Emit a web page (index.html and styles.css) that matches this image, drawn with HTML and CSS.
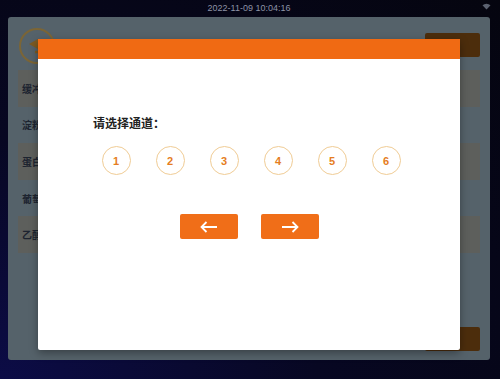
FILE: index.html
```html
<!DOCTYPE html>
<html lang="zh">
<head>
  <meta charset="UTF-8">
  <title>选择通道</title>
  <link rel="stylesheet" href="styles.css">
</head>
<body>
  <div class="statusbar">
    <span class="time">2022-11-09 10:04:16</span>
    <svg class="wifi" width="9" height="7" viewBox="0 0 9 7">
      <path d="M0.5 2.2 A6 6 0 0 1 8.5 2.2 L4.5 6.5 Z" fill="#5b6170"/>
    </svg>
  </div>

  <div class="panel">
    <div class="panel-head">
      <div class="back">
        <svg width="22" height="22" viewBox="0 0 22 22">
          <path d="M3 9 L12 4 L12 14 Z" fill="#7b5a22"/>
          <path d="M9 17 H17" stroke="#7b5a22" stroke-width="2.5"/>
        </svg>
      </div>
      <div class="panel-title">试剂管理</div>
      <div class="btn-dark"></div>
    </div>

    <div class="rows">
      <div class="row striped">缓冲液</div>
      <div class="row">淀粉酶</div>
      <div class="row striped">蛋白酶</div>
      <div class="row">葡萄糖</div>
      <div class="row striped">乙醇</div>
    </div>

    <div class="panel-foot">
      <div class="btn-dark"></div>
    </div>
  </div>

  <div class="modal">
    <div class="modal-head"></div>
    <div class="modal-body">
      <div class="modal-title">请选择通道：</div>
      <div class="channels">
        <div class="channel">1</div>
        <div class="channel">2</div>
        <div class="channel">3</div>
        <div class="channel">4</div>
        <div class="channel">5</div>
        <div class="channel">6</div>
      </div>
      <div class="actions">
        <button class="nav-btn">
          <svg width="20" height="12" viewBox="0 0 20 12">
            <path d="M18 6 H2.5 M7.5 1 L2.5 6 L7.5 11" fill="none" stroke="#fff" stroke-width="1.8"/>
          </svg>
        </button>
        <button class="nav-btn">
          <svg width="20" height="12" viewBox="0 0 20 12">
            <path d="M2 6 H17.5 M12.5 1 L17.5 6 L12.5 11" fill="none" stroke="#fff" stroke-width="1.8"/>
          </svg>
        </button>
      </div>
    </div>
  </div>
</body>
</html>
```

FILE: styles.css
```css
body {
  margin: 0;
  width: 500px;
  height: 379px;
  overflow: hidden;
  font-family: "Noto Sans CJK SC", "Noto Sans", sans-serif;
  background: radial-gradient(ellipse at 0% 100%, #0c0c46 0%, #070722 45%, #05050f 100%);
  padding: 0 10px 0 8px;
  box-sizing: border-box;
  position: relative;
}

.statusbar {
  height: 17px;
  display: flex;
  align-items: center;
  justify-content: center;
  position: relative;
}
.time {
  font-family: "Liberation Sans", sans-serif;
  font-size: 9px;
  color: #8d93a6;
  margin-top: -2px;
}
.wifi {
  position: absolute;
  right: -1px;
  top: 3px;
}

.panel {
  height: 343px;
  background: #55626a;
  border-radius: 3px;
  padding: 11px 10px 9px 10px;
  box-sizing: border-box;
  display: flex;
  flex-direction: column;
}
.panel-head {
  display: flex;
  align-items: flex-start;
  height: 42px;
}
.back {
  width: 32px;
  height: 32px;
  border: 2px solid #7b6536;
  border-radius: 50%;
  margin-left: 1px;
  display: flex;
  align-items: center;
  justify-content: center;
}
.panel-title {
  flex: 1;
  font-size: 12px;
  color: #1d2430;
  padding: 8px 0 0 40px;
}
.btn-dark {
  width: 55px;
  height: 24px;
  margin-top: 5px;
  background: #4c2d0c;
  border-radius: 2px;
}

.rows {
  display: flex;
  flex-direction: column;
}
.row {
  height: 36.6px;
  display: flex;
  align-items: center;
  padding-left: 4px;
  font-size: 10px;
  font-weight: bold;
  color: #1d2430;
}
.row.striped {
  background: #5d5f5c;
}

.panel-foot {
  margin-top: auto;
  display: flex;
  justify-content: flex-end;
}

.modal {
  position: absolute;
  left: 38px;
  top: 39px;
  width: 422px;
  height: 311px;
  background: #fff;
  border-radius: 0 0 2px 2px;
  box-shadow: 0 3px 8px rgba(0, 0, 0, 0.35);
  display: flex;
  flex-direction: column;
}
.modal-head {
  height: 20px;
  background: #f06a13;
}
.modal-body {
  padding: 56px 0 0 0;
}
.modal-title {
  padding-left: 55px;
  font-size: 12px;
  font-weight: bold;
  color: #222;
  height: 16px;
  line-height: 16px;
}
.channels {
  display: flex;
  justify-content: center;
  gap: 25px;
  margin-top: 15px;
  padding-left: 4px;
}
.channel {
  width: 27px;
  height: 27px;
  border: 1px solid #f0cc95;
  border-radius: 50%;
  display: flex;
  align-items: center;
  justify-content: center;
  font-family: "Liberation Sans", sans-serif;
  font-size: 11px;
  font-weight: bold;
  color: #e57d22;
}
.actions {
  display: flex;
  justify-content: center;
  gap: 23px;
  margin-top: 39px;
}
.nav-btn {
  width: 58px;
  height: 25px;
  border: none;
  border-radius: 2px;
  background: #f06e18;
  display: flex;
  align-items: center;
  justify-content: center;
  padding: 0;
}
```
